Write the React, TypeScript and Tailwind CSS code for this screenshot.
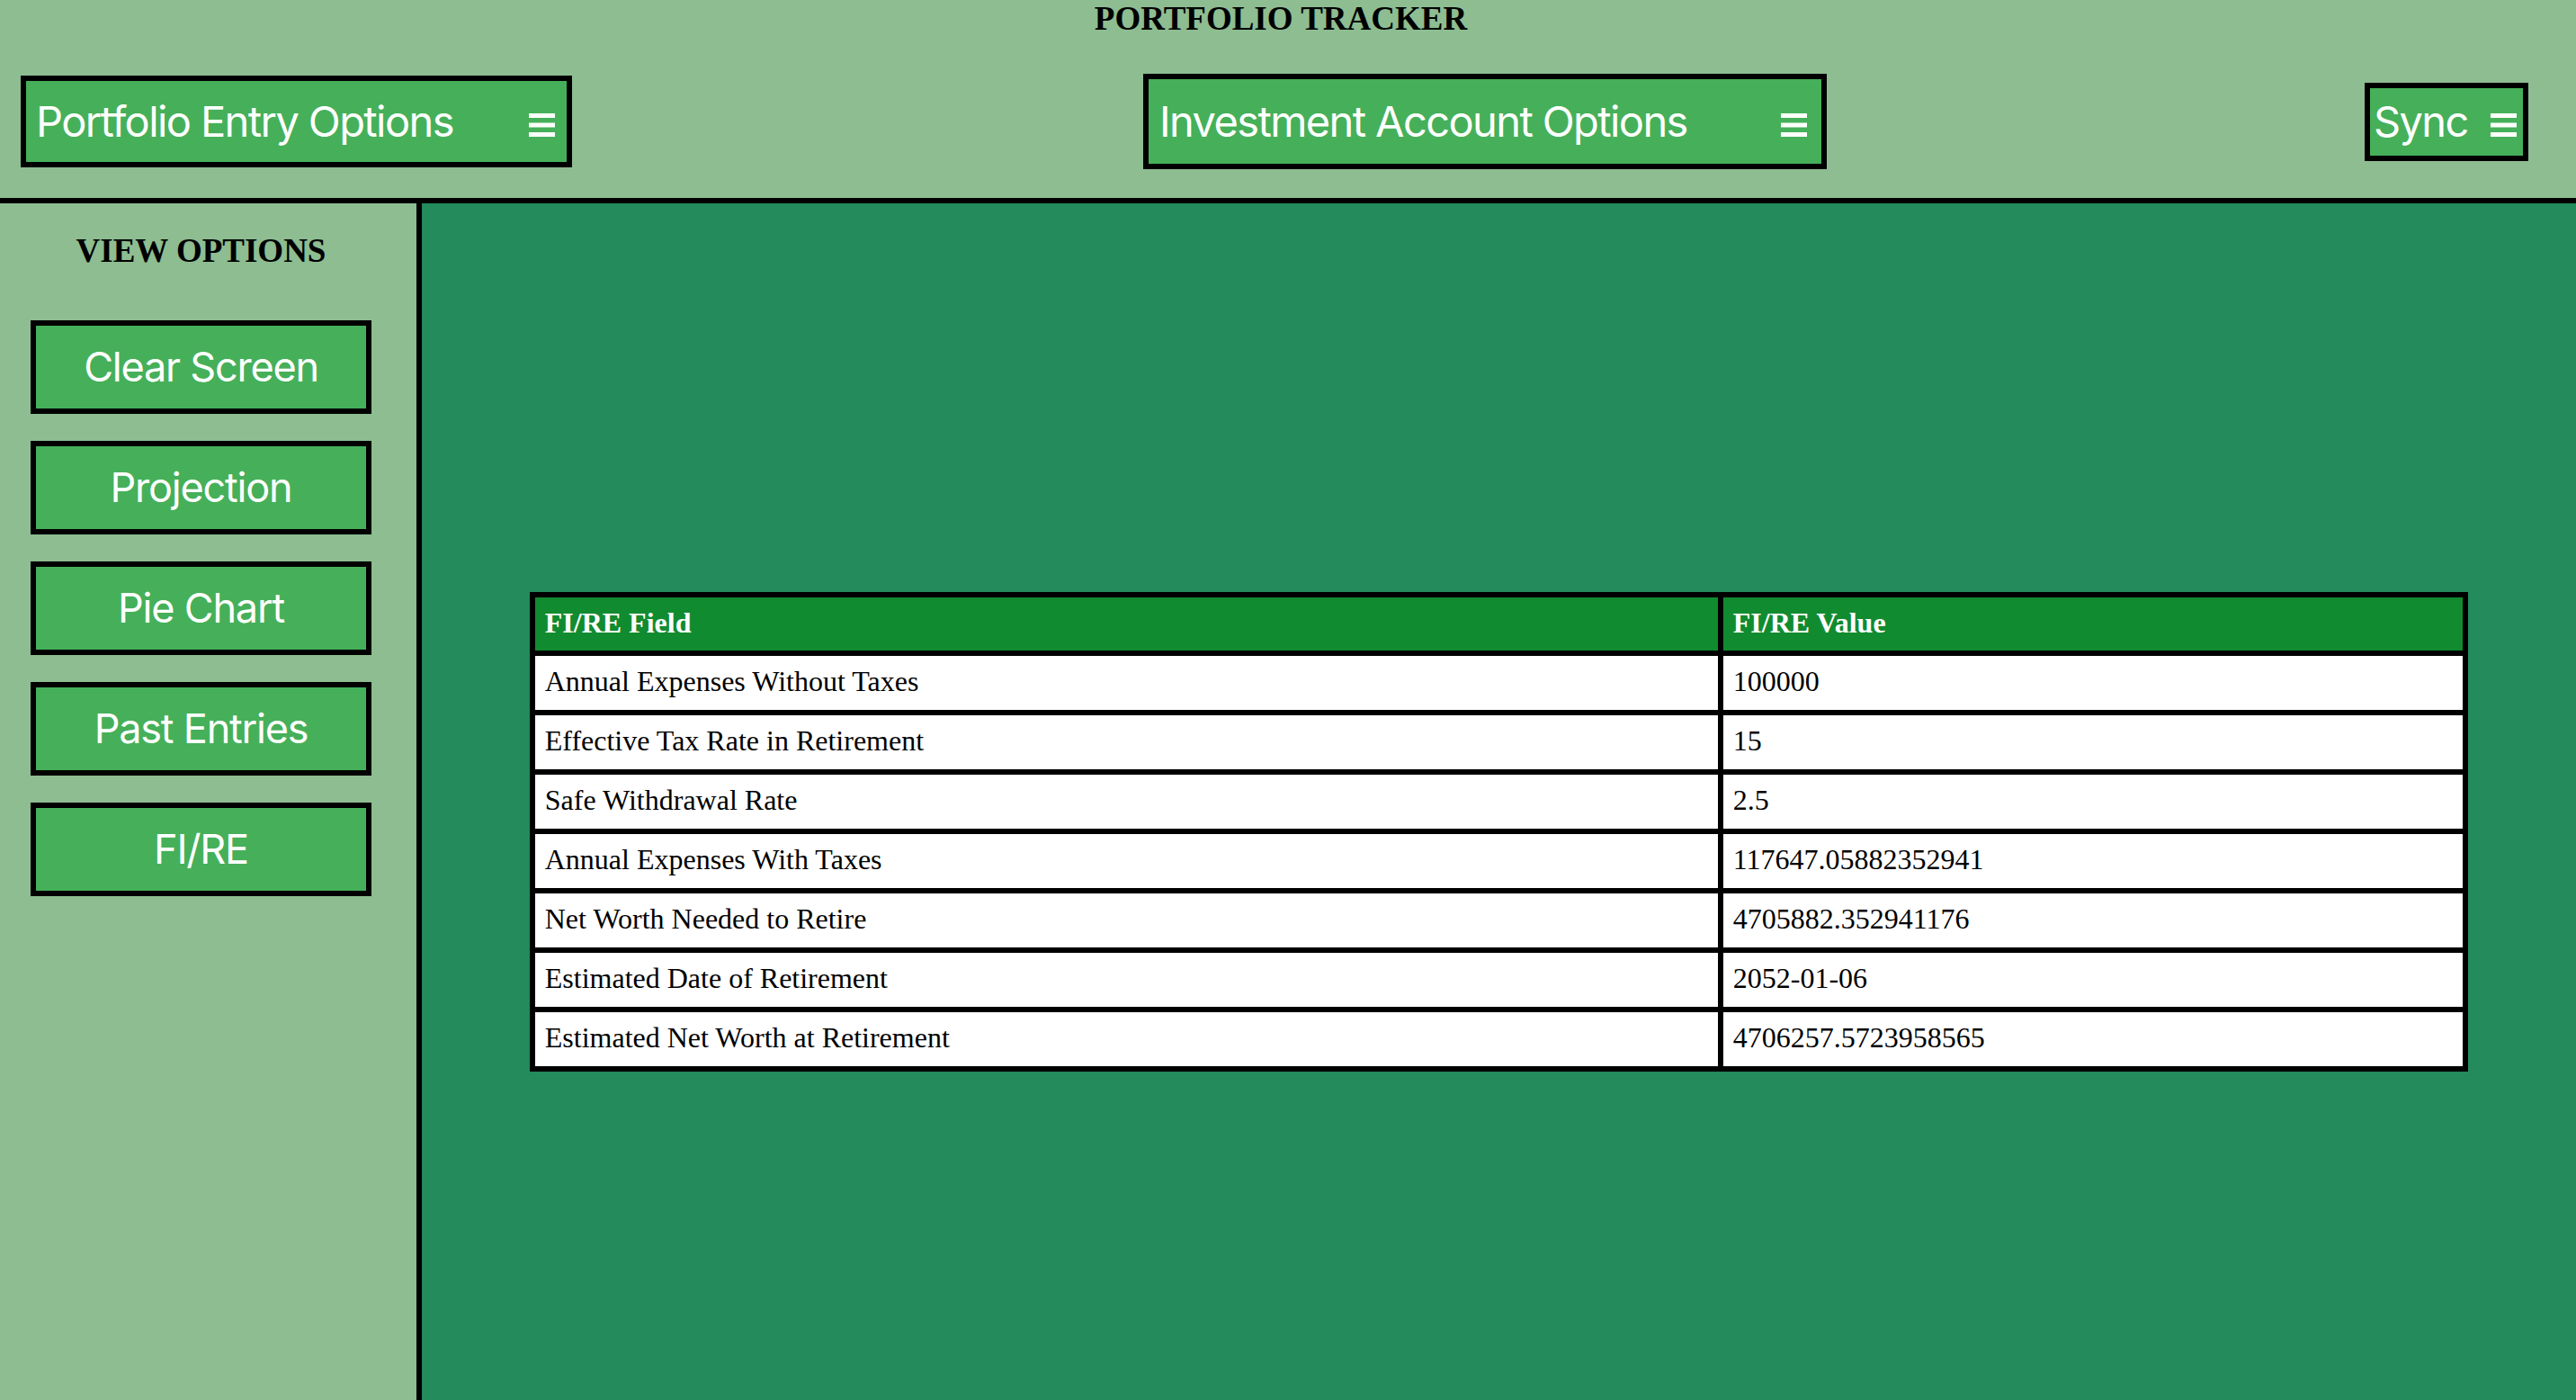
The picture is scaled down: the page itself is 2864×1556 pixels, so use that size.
import React from 'react';

const viewOptions = ['Clear Screen', 'Projection', 'Pie Chart', 'Past Entries', 'FI/RE'];

const fireRows = [
  { field: 'Annual Expenses Without Taxes', value: '100000' },
  { field: 'Effective Tax Rate in Retirement', value: '15' },
  { field: 'Safe Withdrawal Rate', value: '2.5' },
  { field: 'Annual Expenses With Taxes', value: '117647.05882352941' },
  { field: 'Net Worth Needed to Retire', value: '4705882.352941176' },
  { field: 'Estimated Date of Retirement', value: '2052-01-06' },
  { field: 'Estimated Net Worth at Retirement', value: '4706257.5723958565' }
];

function MenuGlyph() {
  return (
    <svg width="29" height="26" viewBox="0 0 29 26" fill="white" className="mt-[8px] shrink-0">
      <rect x="0" y="0" width="29" height="5" />
      <rect x="0" y="10.5" width="29" height="5" />
      <rect x="0" y="21" width="29" height="5" />
    </svg>
  );
}

export default function App() {
  return (
    <div className="h-screen flex flex-col bg-[#8dbd91] font-['Inter',sans-serif] overflow-hidden">
      {/* Header */}
      <header className="h-[226px] shrink-0 border-b-[6px] border-black">
        <h1 className="pr-4 text-center font-['Liberation_Serif',serif] text-[37px] font-bold leading-[42px] text-black">
          PORTFOLIO TRACKER
        </h1>

        <div className="mt-[40px] h-[106px] flex items-center pl-[23px] pr-[53px]">
          <button className="w-[613px] h-[102px] flex items-center justify-between border-[6px] border-black bg-[#45b059] pl-[11px] pr-[13px] text-[47px] tracking-[-1.6px] text-white">
            <span>Portfolio Entry Options</span>
            <MenuGlyph />
          </button>

          <button className="ml-[635px] w-[760px] h-[106px] flex items-center justify-between border-[6px] border-black bg-[#45b059] pl-[12px] pr-[16px] text-[47px] tracking-[-1.6px] text-white">
            <span>Investment Account Options</span>
            <MenuGlyph />
          </button>

          <button className="ml-auto w-[182px] h-[87px] flex items-center justify-between border-[6px] border-black bg-[#45b059] pl-[4px] pr-[7px] text-[47px] tracking-[-1.6px] text-white">
            <span>Sync</span>
            <MenuGlyph />
          </button>
        </div>
      </header>

      <div className="flex-1 flex min-h-0">
        {/* Sidebar */}
        <aside className="w-[469px] shrink-0 border-r-[6px] border-black pl-[34px] pr-[50px]">
          <h2 className="mt-[32px] text-center font-['Liberation_Serif',serif] text-[37px] font-bold leading-[42px] text-black">
            VIEW OPTIONS
          </h2>

          <div className="mt-[56px] flex flex-col gap-[30px]">
            {viewOptions.map((option) => (
              <button
                key={option}
                className="h-[104px] w-full border-[6px] border-black bg-[#45b059] text-center text-[45px] tracking-[-1.2px] text-white"
              >
                {option}
              </button>
            ))}
          </div>
        </aside>

        {/* Main content */}
        <main className="flex-1 bg-[#238b5c] pt-[432px]">
          <div className="mx-auto w-[90%] grid grid-cols-[1315px_1fr] gap-[6px] bg-black p-[6px] font-['Liberation_Serif',serif] text-[32px]">
            <div className="h-[59px] flex items-center bg-[#118b2f] pl-[11px] pb-[4px] font-bold text-white">FI/RE Field</div>
            <div className="h-[59px] flex items-center bg-[#118b2f] pl-[11px] pb-[4px] font-bold text-white">FI/RE Value</div>
            {fireRows.map((row) => (
              <React.Fragment key={row.field}>
                <div className="h-[60px] flex items-center bg-white pl-[11px] pb-[4px] text-black">{row.field}</div>
                <div className="h-[60px] flex items-center bg-white pl-[11px] pb-[4px] text-black">{row.value}</div>
              </React.Fragment>
            ))}
          </div>
        </main>
      </div>
    </div>
  );
}
